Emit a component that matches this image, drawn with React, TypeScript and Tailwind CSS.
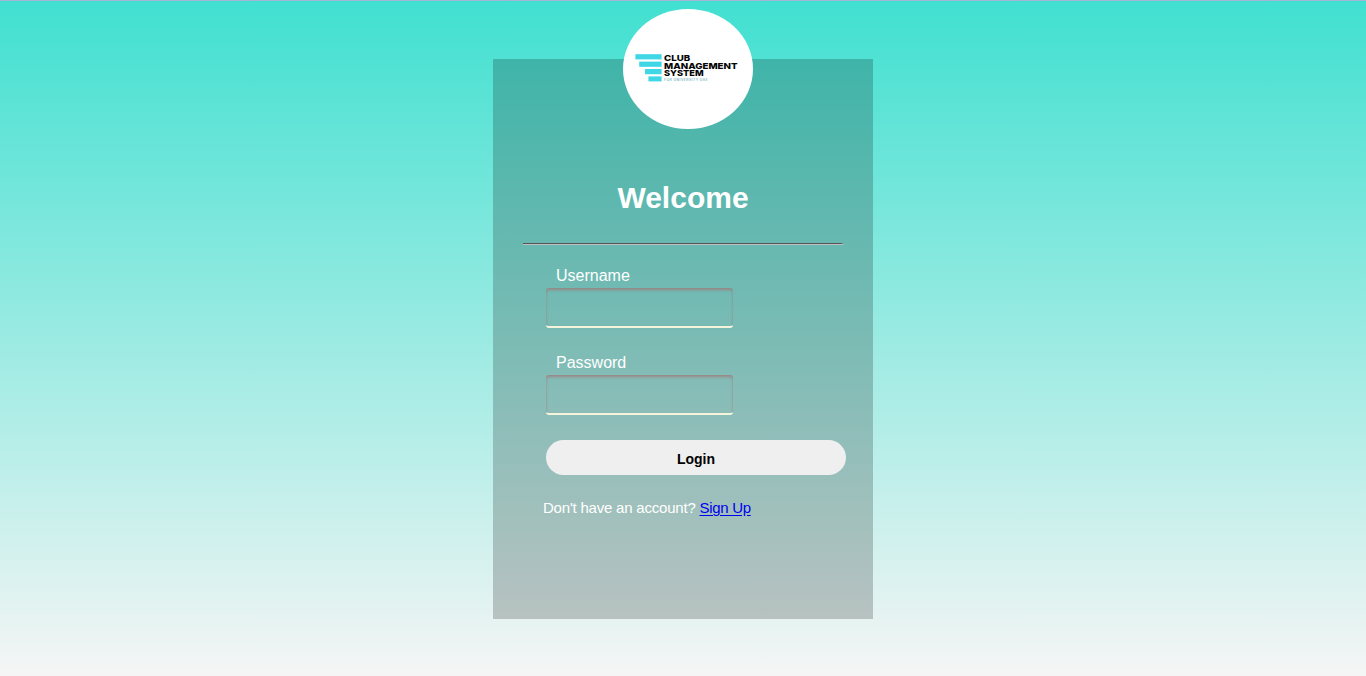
import React from "react";

function Logo() {
  return (
    <div className="absolute left-[130px] top-[-50px] h-[120px] w-[130px] overflow-hidden rounded-[50%] bg-white">
      <svg viewBox="0 0 130 120" className="block h-full w-full" aria-hidden="true">
        <g fill="#3fd6e6">
          <rect x="12.4" y="45.2" width="26.2" height="5.2" />
          <rect x="16.2" y="52.6" width="22.4" height="5.2" />
          <rect x="22" y="60" width="16.6" height="5.2" />
          <rect x="25.4" y="67.4" width="13.2" height="5" />
        </g>
        <g className="font-['Inter',sans-serif] font-extrabold" fill="#050505" fontSize="8.2">
          <text x="41" y="52.2" textLength="26.2" lengthAdjust="spacingAndGlyphs">CLUB</text>
          <text x="41" y="59.5" textLength="73.6" lengthAdjust="spacingAndGlyphs">MANAGEMENT</text>
          <text x="41" y="66.8" textLength="39.6" lengthAdjust="spacingAndGlyphs">SYSTEM</text>
        </g>
        <text x="41" y="72" fontSize="3.4" fill="#5fa9b8" textLength="43.5" className="font-['Inter',sans-serif] font-medium">FOR UNIVERSITY USE</text>
      </svg>
    </div>
  );
}

function Field({ label, type }: { label: string; type: string }) {
  return (
    <label className="mb-[25px] block">
      <span className="ml-[10px] block h-[22px] text-base leading-5">{label}</span>
      <input
        type={type}
        className="block h-10 w-[187px] rounded-[3px] border-b-2 border-[#f5f5dc] bg-transparent px-2 shadow-[inset_0_2px_3px_0_#a07878cc] outline-none"
      />
    </label>
  );
}

export default function App() {
  return (
    <main className="h-[676px] border-t border-[#a5b4d0] bg-[linear-gradient(to_bottom,#40e0d0,#f5f5f5)] bg-origin-border pt-[58px] font-['Liberation_Sans',Arial,sans-serif] text-white">
      <section className="relative mx-auto h-[560px] w-[380px] bg-black/20 px-[30px] pt-[119px]">
        <Logo />
        <h1 className="text-center text-[30px] font-bold leading-10">Welcome</h1>
        <hr className="mt-[25px] h-[2px] border-0 border-b border-r border-t border-b-[#c0c0c0] border-r-[#c0c0c0] border-t-[#555]" />
        <form className="ml-[23px] pt-[21px]" onSubmit={(e) => e.preventDefault()}>
          <Field label="Username" type="text" />
          <Field label="Password" type="password" />
          <button className="block h-[35px] w-[300px] rounded-[20px] bg-[#efefef] pt-1 text-[14px] font-bold text-black">Login</button>
        </form>
        <p className="ml-5 mt-[23px] text-[15px] leading-5 tracking-[-0.21px]">
          Don't have an account? <a href="#" className="tracking-[-0.3px] text-[#0000ee] underline underline-offset-2">Sign Up</a>
        </p>
      </section>
    </main>
  );
}
